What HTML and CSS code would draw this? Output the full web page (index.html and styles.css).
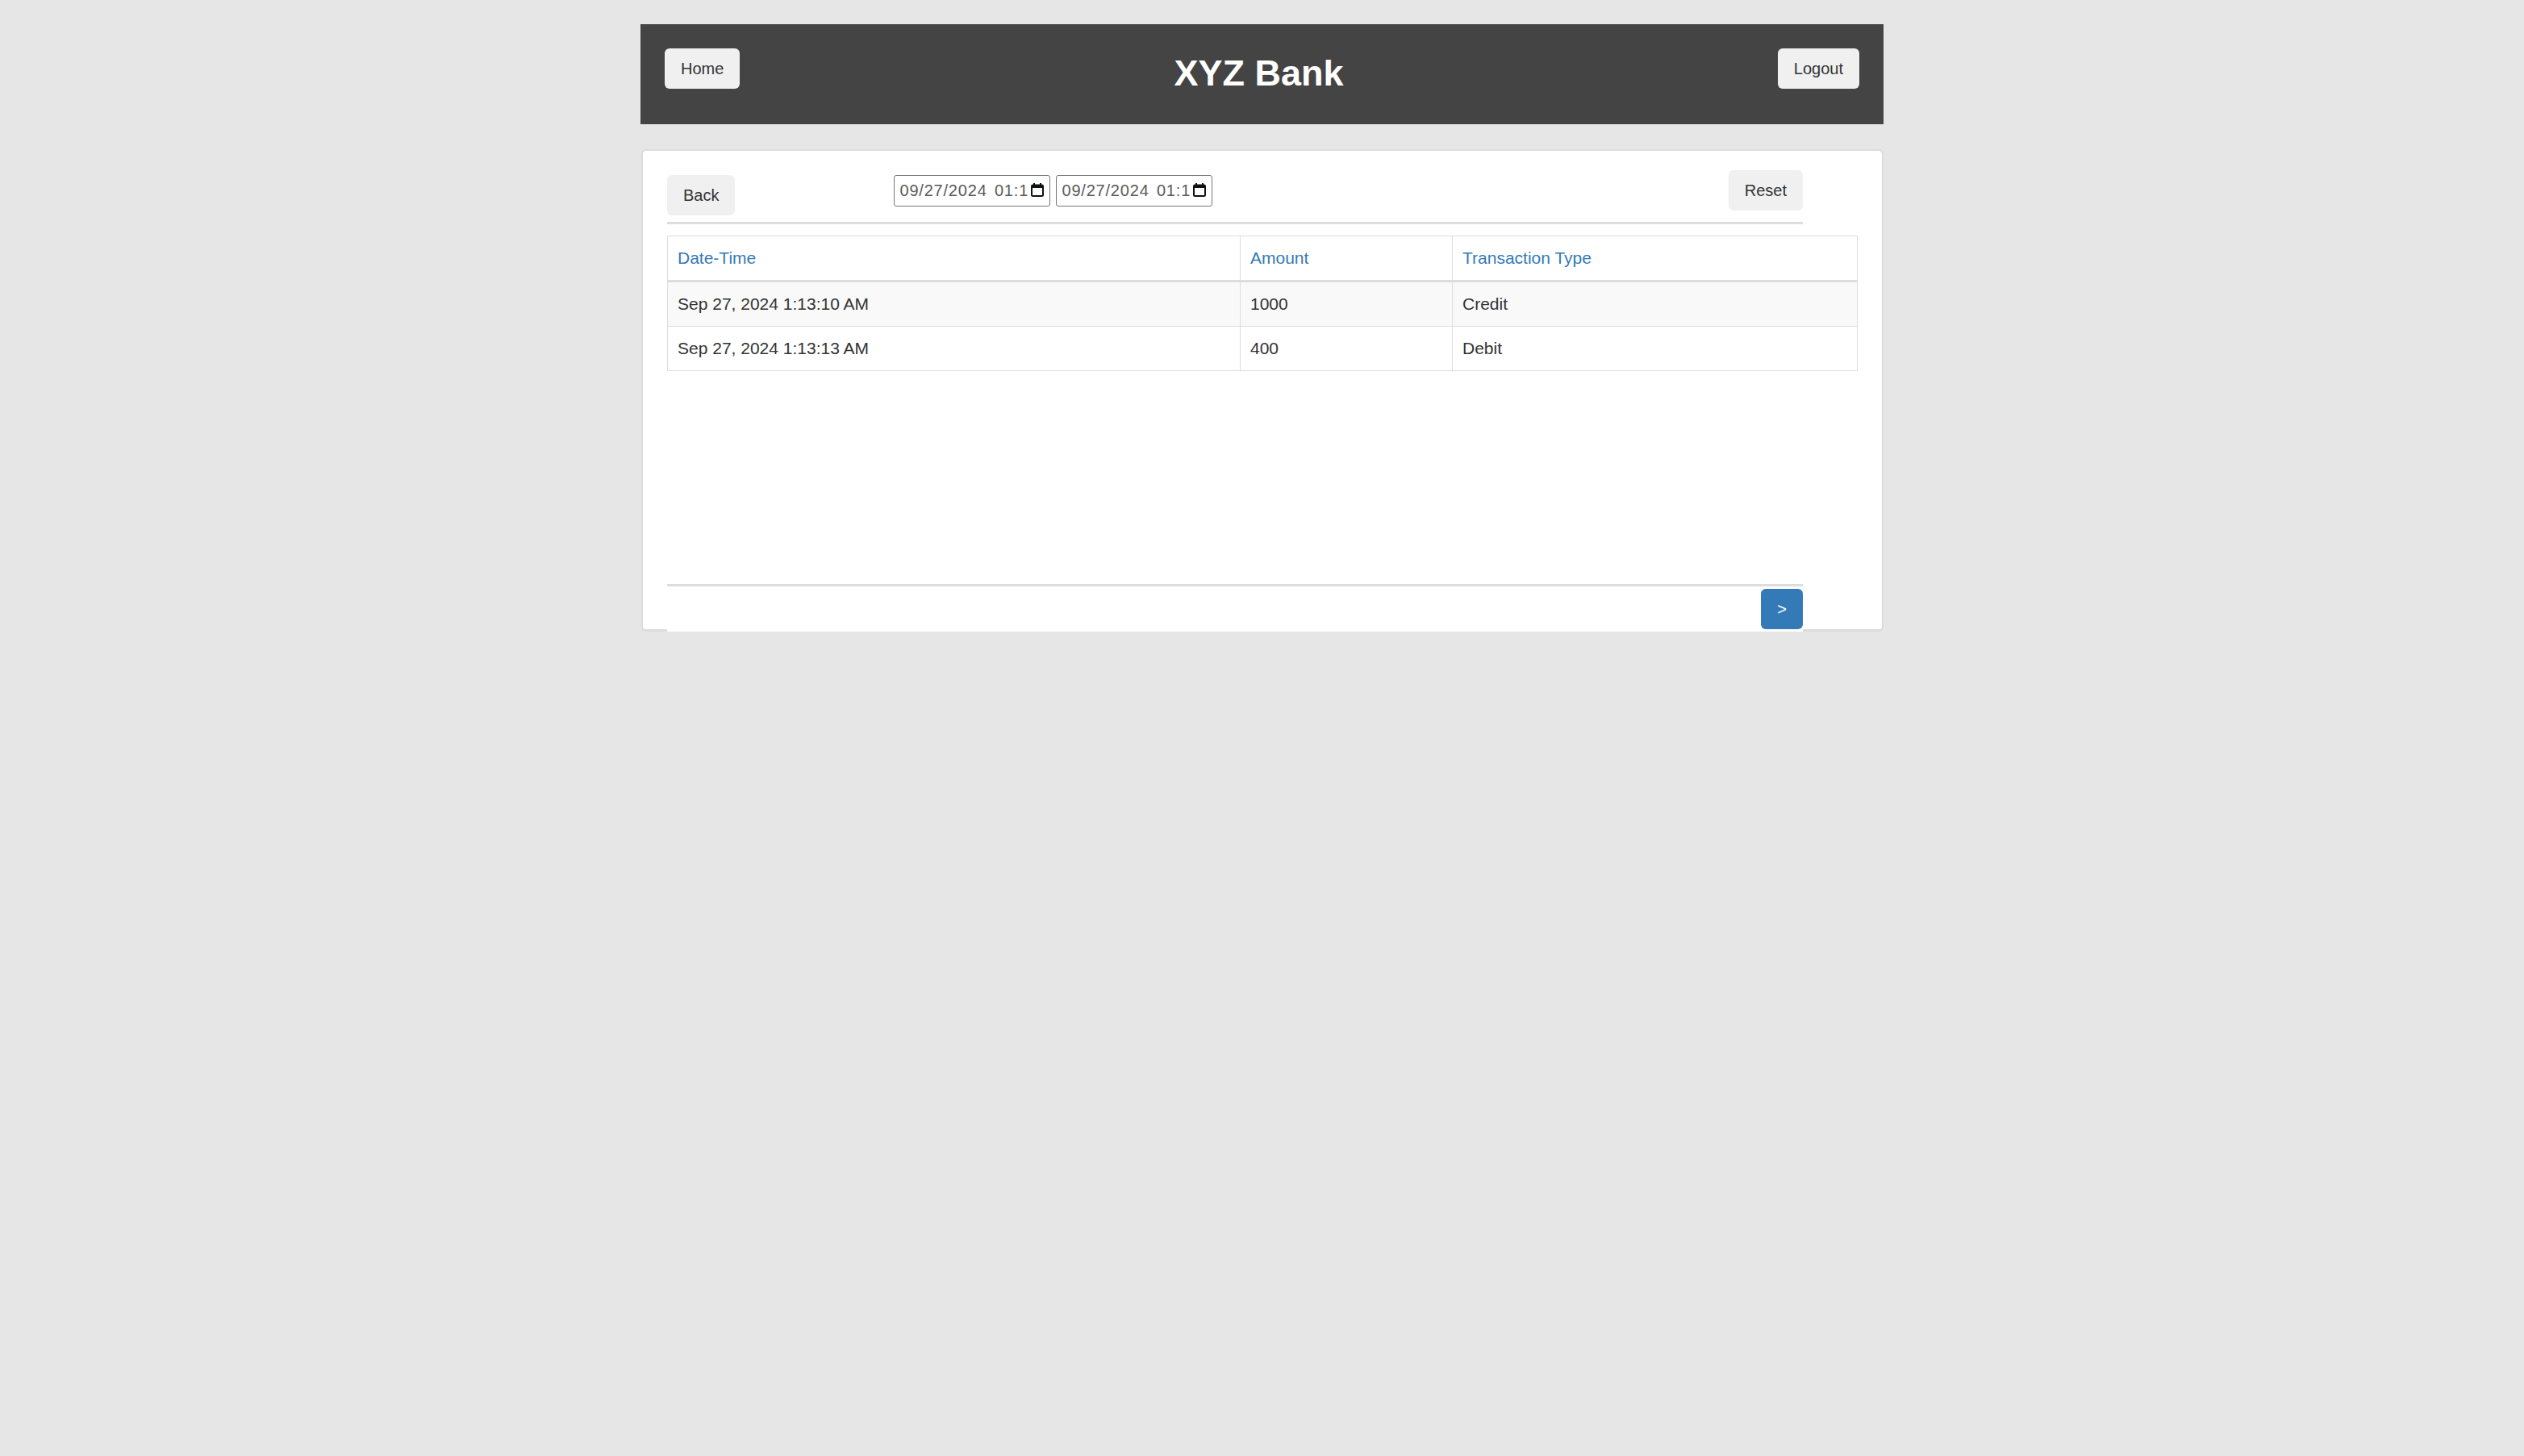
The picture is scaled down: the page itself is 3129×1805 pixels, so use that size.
FILE: index.html
```html
<!DOCTYPE html>
<html lang="en">
<head>
<meta charset="utf-8">
<title>XYZ Bank - Transactions</title>
<link rel="stylesheet" href="styles.css">
</head>
<body>
<div class="page">
  <header class="topnav">
    <button class="btn">Home</button>
    <h1 class="brand">XYZ Bank</h1>
    <button class="btn">Logout</button>
  </header>
  <main class="card">
    <div class="toolbar">
      <button class="btn btn-back">Back</button>
      <div class="dates">
        <div class="date-field">
          <input class="date-input" type="text" value="09/27/2024 01:13 AM" readonly>
          <svg class="cal-icon" width="16" height="17" viewBox="0 0 16 17"><rect x="3" y="0" width="2" height="3" fill="#111"/><rect x="11" y="0" width="2" height="3" fill="#111"/><rect x="1" y="2.5" width="14" height="13.5" rx="1.5" fill="none" stroke="#111" stroke-width="2"/><rect x="1" y="2" width="14" height="4" fill="#111"/></svg>
        </div>
        <div class="date-field">
          <input class="date-input" type="text" value="09/27/2024 01:13 AM" readonly>
          <svg class="cal-icon" width="16" height="17" viewBox="0 0 16 17"><rect x="3" y="0" width="2" height="3" fill="#111"/><rect x="11" y="0" width="2" height="3" fill="#111"/><rect x="1" y="2.5" width="14" height="13.5" rx="1.5" fill="none" stroke="#111" stroke-width="2"/><rect x="1" y="2" width="14" height="4" fill="#111"/></svg>
        </div>
      </div>
      <button class="btn btn-reset">Reset</button>
    </div>
    <div class="table-area">
      <table class="tx-table">
        <thead>
          <tr>
            <th class="col-date">Date-Time</th>
            <th class="col-amount">Amount</th>
            <th class="col-type">Transaction Type</th>
          </tr>
        </thead>
        <tbody>
          <tr>
            <td>Sep 27, 2024 1:13:10 AM</td>
            <td>1000</td>
            <td>Credit</td>
          </tr>
          <tr>
            <td>Sep 27, 2024 1:13:13 AM</td>
            <td>400</td>
            <td>Debit</td>
          </tr>
        </tbody>
      </table>
    </div>
    <div class="pager">
      <button class="btn btn-primary">&gt;</button>
    </div>
  </main>
</div>
</body>
</html>
```

FILE: styles.css
```css
html, body {
  margin: 0;
  padding: 0;
}

body {
  background: #e6e6e6;
  font-family: "Liberation Sans", Arial, sans-serif;
  font-size: 21px;
  color: #333;
}

.page {
  width: 1541px;
  margin: 30px auto 0;
}

.topnav {
  box-sizing: border-box;
  height: 124px;
  background: #444;
  padding: 30px 30px 0;
  display: flex;
  justify-content: space-between;
  align-items: flex-start;
}

.brand {
  margin: 5px 0 0;
  font-size: 45px;
  line-height: 52px;
  font-weight: bold;
  color: #fff;
}

.btn {
  box-sizing: border-box;
  height: 50px;
  padding: 0 20px;
  border: none;
  border-radius: 6px;
  background: #f0f0f0;
  color: #333;
  font-family: "Liberation Sans", Arial, sans-serif;
  font-size: 20px;
  line-height: 50px;
  cursor: pointer;
}

.card {
  display: block;
  margin: 31px 0 0 1px;
  background: #fff;
  border: 2px solid #dcdcdc;
  border-bottom-width: 3px;
  border-radius: 6px;
  padding: 24px 30px 0;
}

.toolbar {
  width: 1408px;
  display: flex;
  align-items: flex-start;
  padding-bottom: 8px;
  border-bottom: 3px solid #dddddd;
}

.btn-back {
  margin-top: 6px;
}

.dates {
  display: flex;
  gap: 7px;
  margin-left: 197px;
  margin-top: 6px;
}

.date-field {
  position: relative;
  width: 194px;
  height: 39px;
}

.date-input {
  box-sizing: border-box;
  width: 194px;
  height: 39px;
  margin: 0;
  padding: 0 26px 0 6px;
  border: 1px solid #767676;
  border-radius: 3px;
  background: #fff;
  color: #5a5a5a;
  font-family: "Liberation Sans", Arial, sans-serif;
  font-size: 20px;
  letter-spacing: 0.8px;
  word-spacing: 3px;
  outline: none;
}

.cal-icon {
  position: absolute;
  right: 8px;
  top: 10px;
}

.btn-reset {
  margin-left: auto;
}

.table-area {
  height: 432px;
  margin-top: 14px;
}

.tx-table {
  width: 1476px;
  border-collapse: collapse;
  border: 1px solid #ddd;
  table-layout: fixed;
}

.tx-table th,
.tx-table td {
  box-sizing: border-box;
  padding: 12px;
  line-height: 30px;
  text-align: left;
  border: 1px solid #ddd;
  font-size: 21px;
  white-space: nowrap;
}

.tx-table th {
  font-weight: normal;
  color: #337ab7;
  border-bottom: 3px solid #ddd;
}

.tx-table tbody tr:nth-child(odd) {
  background: #f9f9f9;
}

.col-date {
  width: 710px;
}

.col-amount {
  width: 263px;
}

.pager {
  position: relative;
  width: 1408px;
  background: #fff;
  border-top: 3px solid #dddddd;
  padding: 3px 0;
  margin-bottom: -3px;
  display: flex;
  justify-content: flex-end;
}

.btn-primary {
  background: #337ab7;
  color: #fff;
}
```
